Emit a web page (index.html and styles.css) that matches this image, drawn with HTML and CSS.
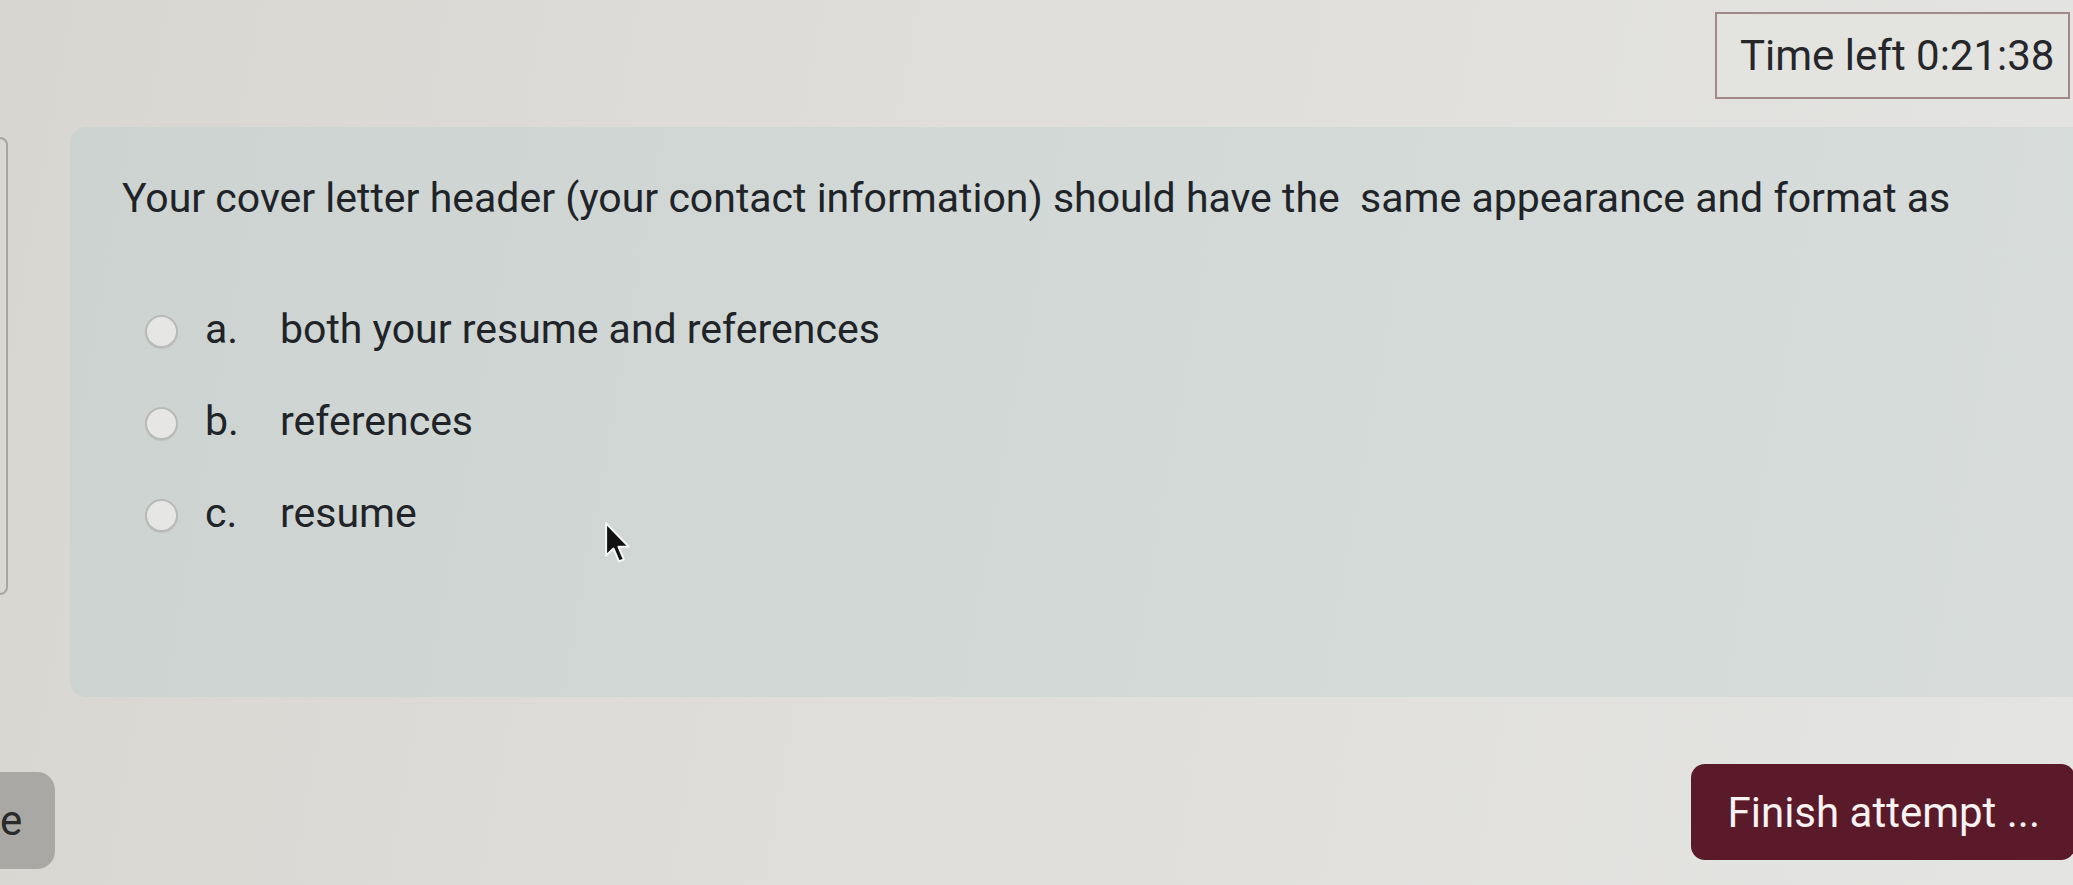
FILE: index.html
```html
<!DOCTYPE html>
<html lang="en">
<head>
<meta charset="utf-8">
<title>Quiz</title>
<link rel="stylesheet" href="styles.css">
</head>
<body>
<div class="page">
  <header class="topbar">
    <div class="timer">Time left 0:21:38</div>
  </header>
  <div class="main">
    <aside class="side"></aside>
    <section class="card">
      <p class="qtext">Your cover letter header (your contact information) should have the&nbsp; same appearance and format as</p>
      <div class="answers">
        <label class="opt"><span class="radio"></span><span class="letter">a.</span><span class="otext">both your resume and references</span></label>
        <label class="opt"><span class="radio"></span><span class="letter">b.</span><span class="otext">references</span></label>
        <label class="opt"><span class="radio"></span><span class="letter">c.</span><span class="otext">resume</span></label>
      </div>
    </section>
  </div>
  <footer class="nav">
    <button class="prev">e</button>
    <button class="finish">Finish attempt ...</button>
  </footer>
</div>
<svg class="cursor" viewBox="0 0 14 21" width="29" height="44" aria-hidden="true">
  <path d="M1 1 L1 16.5 L4.6 13.2 L7.2 19.4 L9.6 18.4 L7 12.3 L12 12.3 Z" fill="#111" stroke="#f4f4f4" stroke-width="1" stroke-linejoin="round"/>
</svg>
</body>
</html>
```

FILE: styles.css
```css
* { box-sizing: border-box; }

html, body {
  margin: 0;
  padding: 0;
  width: 2073px;
  height: 885px;
  overflow: hidden;
}

body {
  font-family: Roboto, "Liberation Sans", Arial, sans-serif;
  background: linear-gradient(100deg, #d8d6d1 0%, #dfdedb 45%, #e4e4e2 100%);
  color: #222529;
  position: relative;
}

.page {
  display: flex;
  flex-direction: column;
}

.topbar {
  display: flex;
  justify-content: flex-end;
  padding: 12px 3px 0 0;
}

.timer {
  width: 355px;
  height: 87px;
  border: 2px solid #a3888a;
  background: #e3e3e0;
  display: flex;
  align-items: center;
  padding-left: 23px;
  font-size: 42px;
  color: #25272b;
  white-space: nowrap;
}

.main {
  display: flex;
  align-items: flex-start;
  margin-top: 28px;
}

.side {
  width: 8px;
  height: 458px;
  margin-top: 10px;
  border: 2px solid #a7a6a2;
  border-left: none;
  border-radius: 0 8px 8px 0;
  background: #dad8d4;
}

.card {
  flex: 1;
  margin-left: 62px;
  margin-right: -30px;
  height: 570px;
  border-radius: 16px;
  background: linear-gradient(100deg, #cdd3d1 0%, #d3d9d7 50%, #d8dddc 100%);
  padding: 46px 0 0 52px;
}

.qtext {
  margin: 0;
  font-size: 41px;
  line-height: 50px;
  color: #202327;
  white-space: nowrap;
}

.answers {
  display: flex;
  flex-direction: column;
  gap: 32px;
  margin-top: 76px;
  padding-left: 23px;
}

.opt {
  display: flex;
  align-items: center;
  height: 60px;
  font-size: 41px;
  line-height: 60px;
  color: #202327;
}

.radio {
  width: 33px;
  height: 33px;
  border-radius: 50%;
  border: 2px solid #b9bab8;
  background: #e6e7e5;
  box-shadow: 0 1px 1px rgba(0, 0, 0, 0.08);
  margin-top: 4px;
  margin-right: 27px;
  flex: none;
}

.letter {
  width: 75px;
  flex: none;
}

.otext {
  white-space: nowrap;
}

.nav {
  display: flex;
  justify-content: space-between;
  align-items: flex-start;
  margin-top: 67px;
}

.prev {
  margin-top: 8px;
  width: 55px;
  height: 97px;
  border: none;
  border-radius: 0 18px 18px 0;
  background: #a9a8a4;
  font-family: Roboto, "Liberation Sans", Arial, sans-serif;
  font-size: 42px;
  color: #2a2a2a;
  text-align: left;
  padding: 0;
  display: flex;
  align-items: center;
}

.finish {
  height: 96px;
  margin-right: -2px;
  border: none;
  border-radius: 14px;
  background: #5b1a29;
  color: #f7f3f3;
  font-family: Roboto, "Liberation Sans", Arial, sans-serif;
  font-size: 42px;
  padding: 0 35px 0 37px;
  white-space: nowrap;
}

.cursor {
  position: absolute;
  left: 604px;
  top: 521px;
}
```
